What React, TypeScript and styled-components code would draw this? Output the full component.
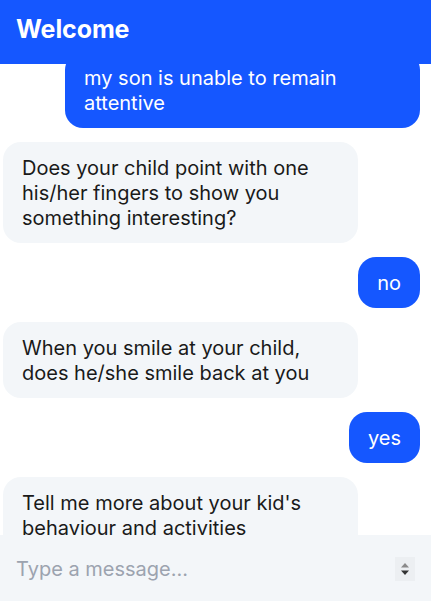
import React, { useLayoutEffect, useRef } from "react";
import styled, { createGlobalStyle } from "styled-components";

const Global = createGlobalStyle`
  html, body { margin: 0; padding: 0; height: 100%; }
  body { font-family: Inter, "Noto Sans", sans-serif; background: #ffffff; }
  #root { height: 100%; }
  * { box-sizing: border-box; }
`;

const Shell = styled.div`
  height: 100vh;
  display: flex;
  flex-direction: column;
  overflow: hidden;
`;

const Header = styled.header`
  height: 64px;
  flex: 0 0 64px;
  background: #1557ff;
  display: flex;
  align-items: center;
  padding: 0 16px 6px;
  position: relative;
  z-index: 1;
`;

const Title = styled.h1`
  margin: 0;
  color: #ffffff;
  font-size: 25px;
  font-weight: 700;
  letter-spacing: -0.1px;
`;

const Messages = styled.div`
  flex: 1;
  overflow-y: auto;
  display: flex;
  flex-direction: column;
  gap: 14px;
  padding: 14px 11px 14px 3px;
  scrollbar-width: none;
  &::-webkit-scrollbar { display: none; }
`;

const Bubble = styled.div<{ $mine?: boolean }>`
  align-self: ${(p) => (p.$mine ? "flex-end" : "flex-start")};
  max-width: 355px;
  padding: 14px 19px 12px;
  border-radius: 18px;
  font-size: 20px;
  line-height: 25px;
  color: ${(p) => (p.$mine ? "#ffffff" : "#1a1a1a")};
  background: ${(p) => (p.$mine ? "#1557ff" : "#f3f6f9")};
  flex-shrink: 0;
`;

const InputBar = styled.div`
  flex: 0 0 66px;
  height: 66px;
  background: #f3f6f9;
  display: flex;
  align-items: center;
  padding: 1px 16px 0;
`;

const Field = styled.input`
  flex: 1;
  border: none;
  outline: none;
  background: transparent;
  font-family: Inter, "Noto Sans", sans-serif;
  font-size: 20px;
  color: #1a1a1a;
  padding: 0;
  &::placeholder { color: #9ca3af; }
`;

const Spinner = styled.div`
  width: 20px;
  height: 24px;
  background: #eceff2;
  display: flex;
  align-items: center;
  justify-content: center;
`;

const messages: { text: string; mine?: boolean }[] = [
  { text: "my son is unable to remain attentive", mine: true },
  { text: "Does your child point with one his/her fingers to show you something interesting?" },
  { text: "no", mine: true },
  { text: "When you smile at your child, does he/she smile back at you" },
  { text: "yes", mine: true },
  { text: "Tell me more about your kid's behaviour and activities" },
];

export default function App() {
  const listRef = useRef<HTMLDivElement>(null);
  useLayoutEffect(() => {
    if (listRef.current) listRef.current.scrollTop = 26;
  }, []);
  return (
    <Shell>
      <Global />
      <Header>
        <Title>Welcome</Title>
      </Header>
      <Messages ref={listRef}>
        {messages.map((m, i) => (
          <Bubble key={i} $mine={m.mine}>
            {m.text}
          </Bubble>
        ))}
      </Messages>
      <InputBar>
        <Field placeholder="Type a message..." />
        <Spinner>
          <svg width="12" height="18" viewBox="0 0 12 18">
            <path d="M6 3 L10 7.5 L2 7.5 Z" fill="#8a8a8a" />
            <path d="M2 10.5 L10 10.5 L6 15 Z" fill="#333333" />
          </svg>
        </Spinner>
      </InputBar>
    </Shell>
  );
}
